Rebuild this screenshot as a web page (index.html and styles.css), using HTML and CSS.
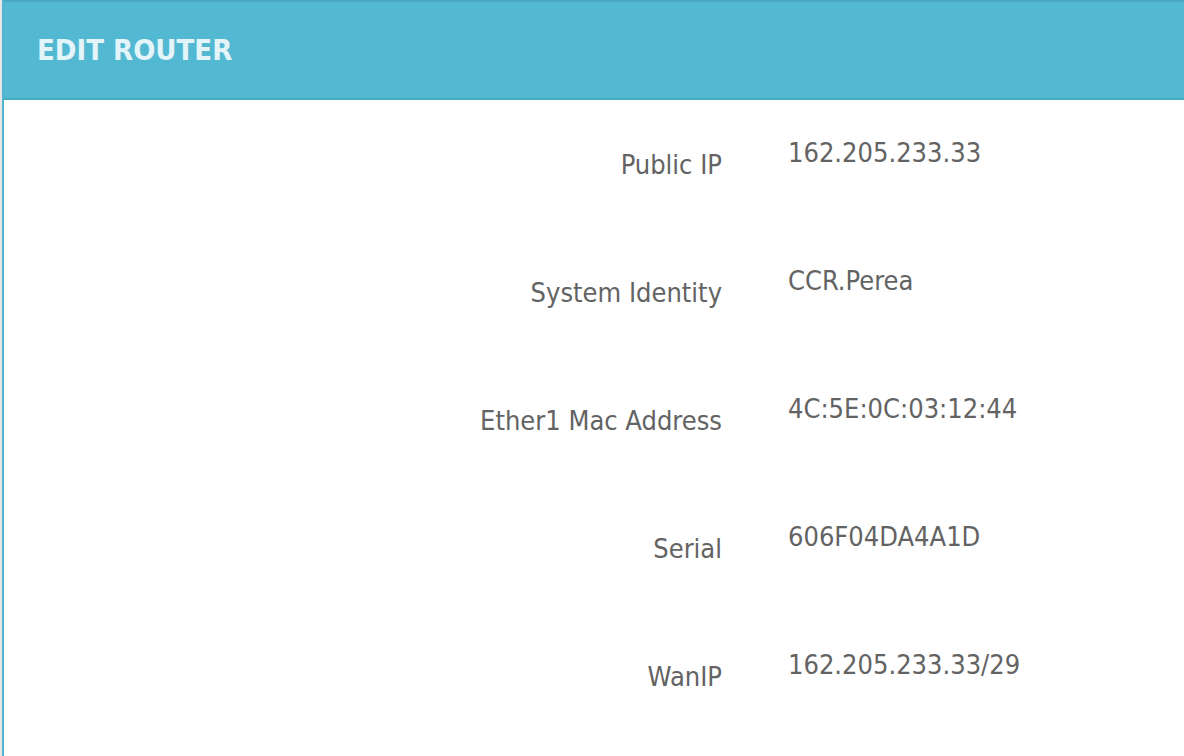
FILE: index.html
```html
<!DOCTYPE html>
<html>
<head>
<meta charset="utf-8">
<link rel="stylesheet" href="styles.css">
</head>
<body>
<div class="page">
  <div class="panel">
    <div class="panel-header">
      <h1 class="panel-title">EDIT ROUTER</h1>
    </div>
    <div class="panel-body">
      <div class="row"><div class="label">Public IP</div><div class="value">162.205.233.33</div></div>
      <div class="row"><div class="label">System Identity</div><div class="value">CCR.Perea</div></div>
      <div class="row"><div class="label">Ether1 Mac Address</div><div class="value">4C:5E:0C:03:12:44</div></div>
      <div class="row"><div class="label">Serial</div><div class="value">606F04DA4A1D</div></div>
      <div class="row"><div class="label">WanIP</div><div class="value">162.205.233.33/29</div></div>
    </div>
  </div>
</div>
</body>
</html>
```
FILE: styles.css
```css
html, body {
  margin: 0;
  padding: 0;
  background: #ffffff;
  overflow: hidden;
}
.page {
  width: 1184px;
  height: 756px;
  background: #e6e6e6;
  padding-left: 2px;
  box-sizing: border-box;
  font-family: "DejaVu Sans Condensed", "DejaVu Sans", sans-serif;
}
.panel {
  height: 100%;
  background: #ffffff;
  border-left: 2px solid #52b5cd;
}
.panel-header {
  height: 96px;
  background: #53b8d1;
  border-top: 2px solid #4aa9c1;
  border-bottom: 2px solid #4aa9c1;
  display: flex;
  align-items: center;
  padding-left: 33px;
}
.panel-title {
  margin: 0;
  font-size: 29px;
  font-weight: bold;
  color: #e4f5f9;
  letter-spacing: 0;
}
.panel-body {
  padding-top: 37px;
}
.row {
  display: grid;
  grid-template-columns: 718px 1fr;
  column-gap: 66px;
  height: 128px;
  align-items: start;
}
.label, .value {
  font-size: 27px;
  line-height: 32px;
  color: #636363;
}
.label {
  text-align: right;
  margin-top: 12px;
}
```
